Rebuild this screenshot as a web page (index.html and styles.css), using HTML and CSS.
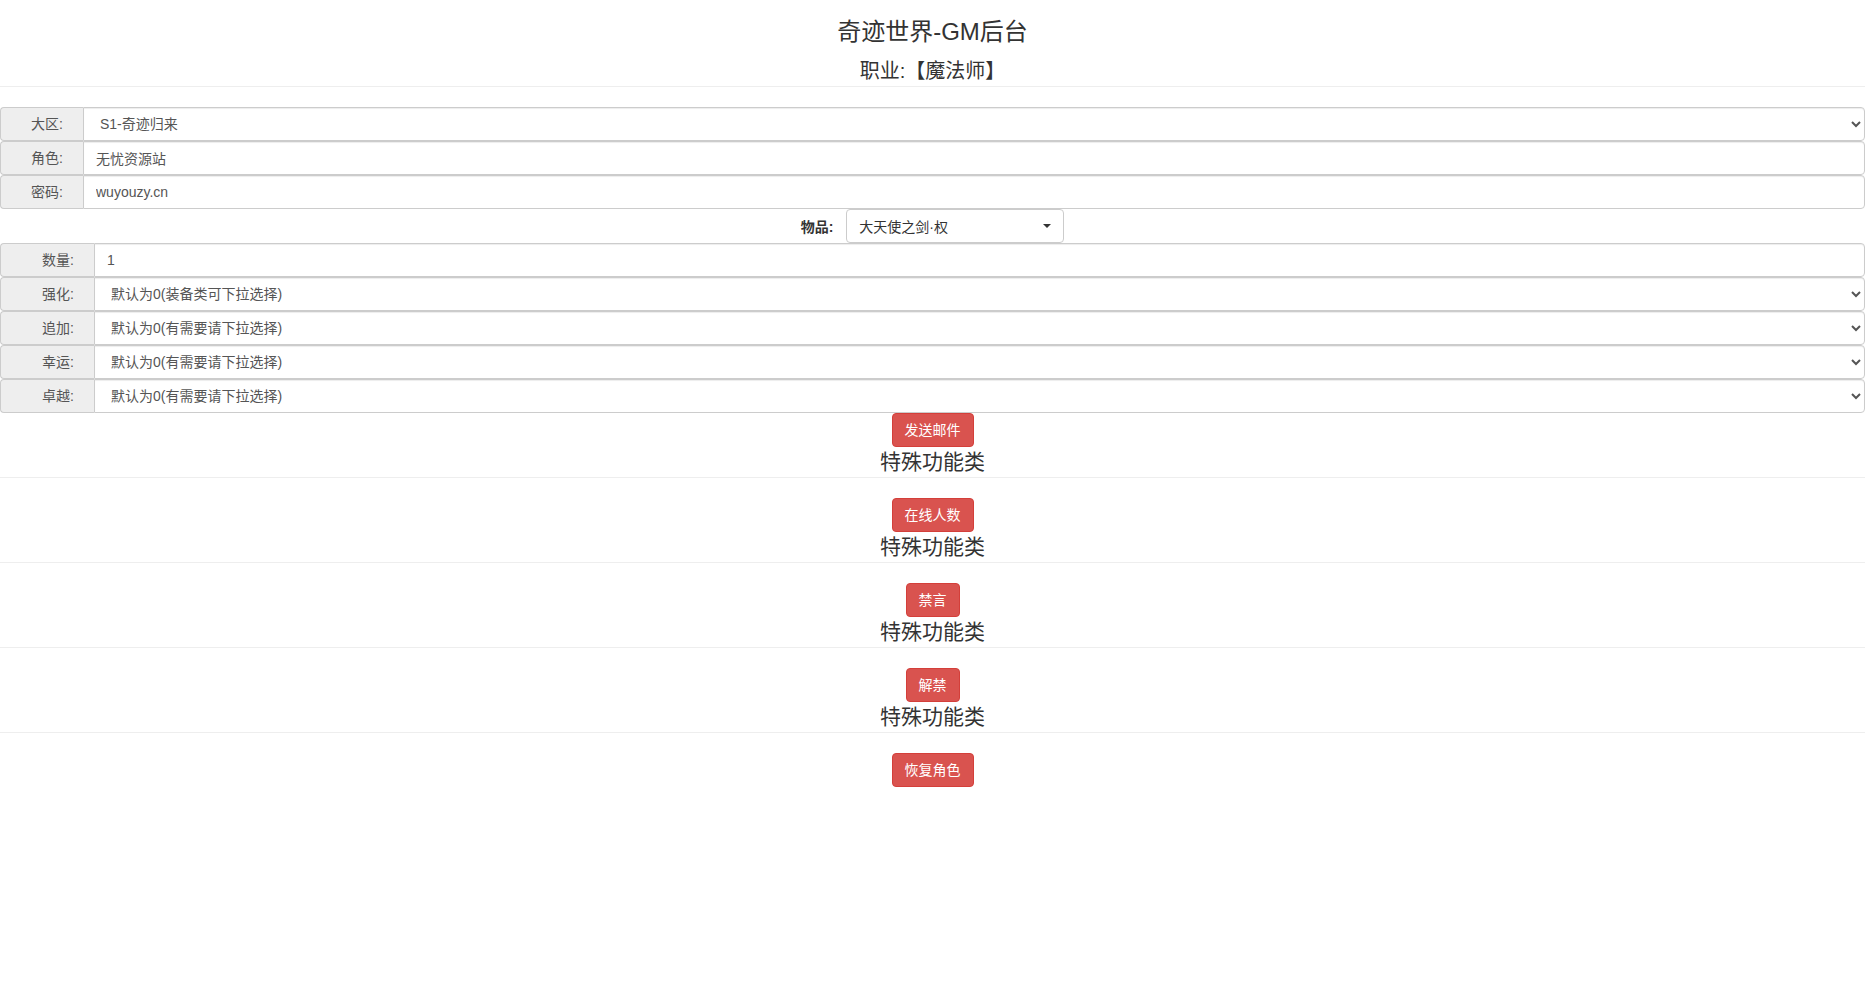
FILE: index.html
```html
<!DOCTYPE html>
<html>
  <head>
    <meta charset="utf-8">
    <title>奇迹世界-GM后台</title>
    <link rel="stylesheet" href="styles.css">
  </head>
  <body>
    <header class="page-head">
      <h3 class="page-title">奇迹世界-GM后台</h3>
      <h4 class="page-sub">职业:【魔法师】</h4>
    </header>
    <hr>

    <form id="mailForm" action="" method="POST">
      <div class="input-group">
        <span class="addon">大区:</span>
        <select class="form-control" name="server">
          <option>S1-奇迹归来</option>
        </select>
      </div>
      <div class="input-group">
        <span class="addon">角色:</span>
        <input class="form-control" type="text" name="role" value="无忧资源站">
      </div>
      <div class="input-group">
        <span class="addon">密码:</span>
        <input class="form-control" type="text" name="pass" value="wuyouzy.cn">
      </div>

      <div class="item-row">
        <label for="itemPicker">物品:</label>
        <div class="picker" id="itemPicker">
          <span>大天使之剑·权</span>
          <span class="caret"></span>
        </div>
      </div>

      <div class="input-group wide">
        <span class="addon">数量:</span>
        <input class="form-control" type="text" name="num" value="1">
      </div>
      <div class="input-group wide">
        <span class="addon">强化:</span>
        <select class="form-control" name="level">
          <option>默认为0(装备类可下拉选择)</option>
        </select>
      </div>
      <div class="input-group wide">
        <span class="addon">追加:</span>
        <select class="form-control" name="add">
          <option>默认为0(有需要请下拉选择)</option>
        </select>
      </div>
      <div class="input-group wide">
        <span class="addon">幸运:</span>
        <select class="form-control" name="luck">
          <option>默认为0(有需要请下拉选择)</option>
        </select>
      </div>
      <div class="input-group wide">
        <span class="addon">卓越:</span>
        <select class="form-control" name="excellent">
          <option>默认为0(有需要请下拉选择)</option>
        </select>
      </div>

      <div class="action">
        <button type="button" class="btn">发送邮件</button>
      </div>
    </form>

    <h4 class="section-title">特殊功能类</h4>
    <hr>
    <div class="action">
      <button type="button" class="btn">在线人数</button>
    </div>

    <h4 class="section-title">特殊功能类</h4>
    <hr>
    <div class="action">
      <button type="button" class="btn">禁言</button>
    </div>

    <h4 class="section-title">特殊功能类</h4>
    <hr>
    <div class="action">
      <button type="button" class="btn">解禁</button>
    </div>

    <h4 class="section-title">特殊功能类</h4>
    <hr>
    <div class="action">
      <button type="button" class="btn">恢复角色</button>
    </div>
  </body>
</html>
```

FILE: styles.css
```css
body {
  margin: 0;
  font-family: "Liberation Sans", "Noto Sans CJK SC", sans-serif;
  font-size: 14px;
  color: #333;
}

hr {
  margin: 0 0 20px;
  border: 0;
  border-top: 1px solid #eee;
}

/* header */
.page-head {
  text-align: center;
  padding-top: 15px;
}

.page-title {
  margin: 0;
  font-size: 24px;
  font-weight: normal;
  line-height: 34px;
}

.page-sub {
  margin: 7px 0 0;
  font-size: 20px;
  font-weight: normal;
  line-height: 30px;
}

/* form rows */
.input-group {
  display: flex;
  height: 34px;
}

.addon {
  width: 83px;
  box-sizing: border-box;
  padding: 6px 20px 6px 12px;
  text-align: right;
  line-height: 20px;
  color: #555;
  background-color: #eee;
  border: 1px solid #ccc;
  border-right: 0;
  border-radius: 4px 0 0 4px;
}

.input-group.wide .addon {
  width: 94px;
}

.form-control {
  flex: 1;
  min-width: 0;
  height: 34px;
  box-sizing: border-box;
  margin: 0;
  padding: 6px 12px;
  font-family: inherit;
  font-size: 14px;
  line-height: 20px;
  color: #555;
  background-color: #fff;
  border: 1px solid #ccc;
  border-radius: 0 4px 4px 0;
  box-shadow: inset 0 1px 1px rgba(0, 0, 0, .075);
}

/* item picker */
.item-row {
  display: flex;
  justify-content: center;
  align-items: center;
  height: 34px;
}

.item-row label {
  font-weight: bold;
  margin-right: 13px;
}

.picker {
  width: 218px;
  height: 34px;
  box-sizing: border-box;
  padding: 0 12px;
  display: flex;
  align-items: center;
  justify-content: space-between;
  background-color: #fff;
  border: 1px solid #ccc;
  border-radius: 4px;
}

.caret {
  width: 0;
  height: 0;
  border-top: 4px solid #333;
  border-left: 4px solid transparent;
  border-right: 4px solid transparent;
}

/* buttons */
.action {
  text-align: center;
}

.btn {
  height: 34px;
  margin: 0;
  padding: 6px 12px;
  font-family: inherit;
  font-size: 14px;
  line-height: 20px;
  color: #fff;
  background-color: #d9534f;
  border: 1px solid #d43f3a;
  border-radius: 4px;
  cursor: pointer;
}

.btn:hover {
  background-color: #c9302c;
}

.section-title {
  margin: 0;
  font-size: 21px;
  font-weight: normal;
  line-height: 30px;
  text-align: center;
}
```
